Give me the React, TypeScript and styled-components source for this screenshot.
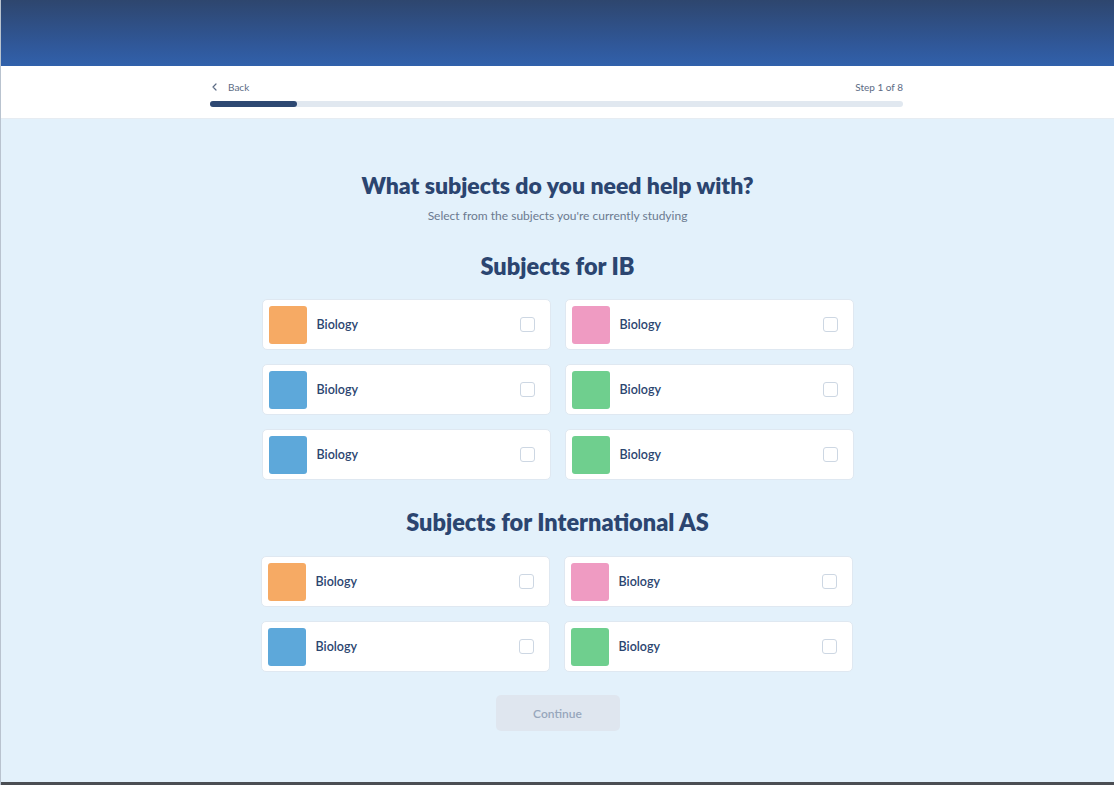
import React from 'react';
import styled, { createGlobalStyle } from 'styled-components';

const GlobalStyle = createGlobalStyle`
  html, body {
    margin: 0;
    padding: 0;
    background: #e3f1fb;
  }
  body {
    font-family: 'Lato', 'Noto Sans', sans-serif;
  }
  * { box-sizing: border-box; }
`;

type Subject = { name: string; color: string };

const ibSubjects: Subject[] = [
  { name: 'Biology', color: '#f6aa64' },
  { name: 'Biology', color: '#ef9bc2' },
  { name: 'Biology', color: '#5da8da' },
  { name: 'Biology', color: '#6fcf8e' },
  { name: 'Biology', color: '#5da8da' },
  { name: 'Biology', color: '#6fcf8e' },
];

const asSubjects: Subject[] = [
  { name: 'Biology', color: '#f6aa64' },
  { name: 'Biology', color: '#ef9bc2' },
  { name: 'Biology', color: '#5da8da' },
  { name: 'Biology', color: '#6fcf8e' },
];

const SubjectCard = ({ subject }: { subject: Subject }) => (
  <Card>
    <Swatch $color={subject.color} />
    <CardLabel>{subject.name}</CardLabel>
    <Checkbox />
  </Card>
);

const App = () => (
  <Page>
    <GlobalStyle />
    <Banner />
    <TopBar>
      <TopInner>
        <NavRow>
          <BackLink>
            <svg width="10" height="10" viewBox="0 0 10 10" fill="none">
              <path d="M6 2L3 5l3 3" stroke="#5c6b84" strokeWidth="1.2" strokeLinecap="round" strokeLinejoin="round" />
            </svg>
            Back
          </BackLink>
          <StepText>Step 1 of 8</StepText>
        </NavRow>
        <Track>
          <Fill style={{ width: `${(1 / 8) * 100}%` }} />
        </Track>
      </TopInner>
    </TopBar>
    <Main>
      <Title>What subjects do you need help with?</Title>
      <Subtitle>Select from the subjects you're currently studying</Subtitle>
      <SectionTitle>Subjects for IB</SectionTitle>
      <Grid>
        {ibSubjects.map((s, i) => (
          <SubjectCard key={i} subject={s} />
        ))}
      </Grid>
      <SectionTitle $top={28}>Subjects for International AS</SectionTitle>
      <Grid $shift={-2} $top={20}>
        {asSubjects.map((s, i) => (
          <SubjectCard key={i} subject={s} />
        ))}
      </Grid>
      <ContinueButton disabled>Continue</ContinueButton>
    </Main>
    <BottomEdge />
  </Page>
);

const Page = styled.div`
  width: 1114px;
  height: 785px;
  display: flex;
  flex-direction: column;
  border-left: 1px solid #b9c3cf;
  overflow: hidden;
`;

const Banner = styled.div`
  height: 66px;
  flex-shrink: 0;
  background: linear-gradient(180deg, #2e466e 0%, #30589a 70%, #3161ab 100%);
`;

const TopBar = styled.div`
  height: 53px;
  flex-shrink: 0;
  background: #ffffff;
  border-bottom: 1px solid #e6ecf2;
  display: flex;
  justify-content: center;
`;

const TopInner = styled.div`
  width: 693px;
  margin-left: -2px;
  padding-top: 14px;
  display: flex;
  flex-direction: column;
  gap: 7px;
`;

const NavRow = styled.div`
  display: flex;
  justify-content: space-between;
  align-items: center;
  height: 14px;
`;

const BackLink = styled.div`
  display: flex;
  align-items: center;
  gap: 8px;
  font-size: 10px;
  color: #5c6b84;
`;

const StepText = styled.div`
  font-size: 10px;
  color: #5c6b84;
`;

const Track = styled.div`
  height: 6px;
  border-radius: 3px;
  background: #e1e8f0;
`;

const Fill = styled.div`
  height: 100%;
  border-radius: 3px;
  background: #2d4872;
`;

const Main = styled.div`
  flex: 1;
  background: #e3f1fb;
  display: flex;
  flex-direction: column;
  align-items: center;
  padding-top: 52px;
`;

const Title = styled.h1`
  margin: 0;
  font-size: 23px;
  font-weight: 800;
  color: #2b4570;
  line-height: 28px;
`;

const Subtitle = styled.p`
  margin: 9px 0 0;
  font-size: 12px;
  color: #6b7a90;
  line-height: 16px;
`;

const SectionTitle = styled.h2<{ $top?: number }>`
  margin: ${(p) => p.$top ?? 28}px 0 0;
  font-size: 23.5px;
  font-weight: 800;
  color: #2b4570;
  line-height: 28px;
`;

const Grid = styled.div<{ $shift?: number; $top?: number }>`
  margin-top: ${(p) => p.$top ?? 19}px;
  margin-left: ${(p) => p.$shift ?? 0}px;
  display: grid;
  grid-template-columns: 289px 289px;
  column-gap: 14px;
  row-gap: 14px;
`;

const Card = styled.div`
  height: 51px;
  background: #ffffff;
  border: 1px solid #dfe8f1;
  border-radius: 5px;
  display: flex;
  align-items: center;
  padding: 0 15px 0 6px;
`;

const Swatch = styled.div<{ $color: string }>`
  width: 38px;
  height: 38px;
  border-radius: 3px;
  background: ${(p) => p.$color};
  flex-shrink: 0;
`;

const CardLabel = styled.span`
  margin-left: 10px;
  flex: 1;
  font-size: 12.5px;
  font-weight: 600;
  color: #2b4570;
`;

const Checkbox = styled.span`
  width: 15px;
  height: 15px;
  border: 1.5px solid #cdd7e3;
  border-radius: 3px;
  background: #ffffff;
`;

const ContinueButton = styled.button`
  margin-top: 23px;
  width: 124px;
  height: 36px;
  border: none;
  border-radius: 5px;
  background: #dfe6ef;
  color: #97a6bc;
  font-family: 'Lato', 'Noto Sans', sans-serif;
  font-size: 12px;
  font-weight: 600;
`;

const BottomEdge = styled.div`
  height: 3px;
  flex-shrink: 0;
  background: #4b4e53;
`;

export default App;
